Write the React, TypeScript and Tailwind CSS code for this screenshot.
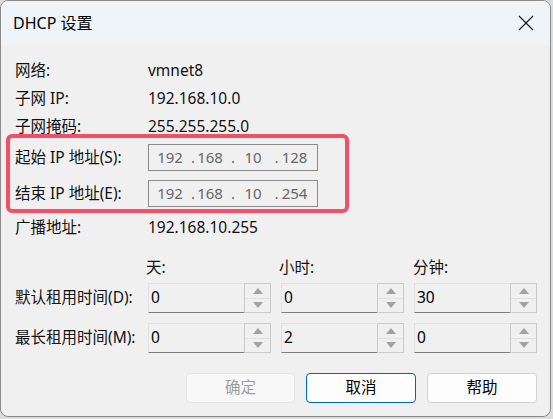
import React from "react";

const font = "font-['Noto_Sans','Noto_Sans_CJK_SC',sans-serif]";

function IpBox({ last }: { last: string }) {
  return (
    <div className="flex h-[27px] w-[170px] items-center border border-[#8c8c8c] bg-[#f0f0f0] text-[15px] text-[#666]">
      <span className="w-[8px]" />
      <span className="w-[26px] text-center">192</span>
      <span className="w-[14px] pr-[2px] text-right">.</span>
      <span className="w-[26px] text-center">168</span>
      <span className="w-[17px] pr-[5px] text-right">.</span>
      <span className="w-[26px] text-center">10</span>
      <span className="w-[15.5px] pr-[3px] text-right">.</span>
      <span className="w-[26px] text-center">{last}</span>
    </div>
  );
}

function Tri({ up }: { up?: boolean }) {
  return (
    <svg width="10" height="6" viewBox="0 0 10 6">
      <polygon points={up ? "0,6 10,6 5,0" : "0,0 10,0 5,6"} fill="#a2a2a2" />
    </svg>
  );
}

function Spin({ value }: { value: string }) {
  return (
    <div className="flex h-[30px] w-[123px]">
      <div className="flex flex-1 items-center border-l border-t border-b border-l-[#e2e2e2] border-t-[#e2e2e2] border-b-[#7f7f7f] bg-[#f0f0f0] pl-[2px] text-[15.5px] text-black">
        {value}
      </div>
      <div className="flex w-[27px] flex-col border border-[#c9c9c9] bg-[#f0f0f0]">
        <div className="flex flex-1 items-center justify-center border-b border-[#e0e0e0]">
          <Tri up />
        </div>
        <div className="flex flex-1 items-center justify-center">
          <Tri />
        </div>
      </div>
    </div>
  );
}

export default function App() {
  const info = [
    ["网络:", "vmnet8"],
    ["子网 IP:", "192.168.10.0"],
    ["子网掩码:", "255.255.255.0"],
  ];

  return (
    <div className={`h-[419px] w-[553px] overflow-hidden bg-[#dcdcdc] ${font}`}>
      <div className="relative flex h-[417px] w-[551px] flex-col overflow-hidden rounded-[8px] border border-[#8a8a8a] bg-[#f0f0f0] text-[15.5px] text-[#111]">
        {/* title bar */}
        <div className="flex h-[44px] shrink-0 items-center justify-between bg-[#eff4f9] pl-[12px] pr-[16px]">
          <span className="text-[16px] text-black">DHCP 设置</span>
          <svg width="16" height="16" viewBox="0 0 16 16">
            <path d="M1 1 L15 15 M15 1 L1 15" stroke="#1b1b1b" strokeWidth="1.2" />
          </svg>
        </div>

        <div className="flex flex-col pl-[14px] pt-[12px]">
          {info.map(([label, value]) => (
            <div key={label} className="flex h-[28px] items-center">
              <span className="w-[133px]">{label}</span>
              <span className="text-[15.5px]">{value}</span>
            </div>
          ))}
          <div className="mt-[3px] flex items-center">
            <span className="w-[133px]">起始 IP 地址(S):</span>
            <IpBox last="128" />
          </div>
          <div className="mt-[9px] flex items-center">
            <span className="w-[133px]">结束 IP 地址(E):</span>
            <IpBox last="254" />
          </div>
          <div className="mt-[8px] flex h-[26px] items-center">
            <span className="w-[133px]">广播地址:</span>
            <span className="text-[15.5px]">192.168.10.255</span>
          </div>

          <div className="mt-[17px] flex h-[20px] items-center pl-[131px]">
            <span className="w-[133px]">天:</span>
            <span className="w-[134px]">小时:</span>
            <span>分钟:</span>
          </div>
          <div className="mt-[5px] flex items-center">
            <span className="w-[133px]">默认租用时间(D):</span>
            <div className="flex gap-[10px]">
              <Spin value="0" />
              <Spin value="0" />
              <Spin value="30" />
            </div>
          </div>
          <div className="mt-[10px] flex items-center">
            <span className="w-[133px]">最长租用时间(M):</span>
            <div className="flex gap-[10px]">
              <Spin value="0" />
              <Spin value="2" />
              <Spin value="0" />
            </div>
          </div>

          <div className="mt-[20px] flex justify-end gap-[11px] pr-[13px]">
            <button className="h-[30px] w-[109px] rounded-[4px] border border-[#e5e5e5] bg-[#f8f8f8] text-[#9d9d9d]">
              确定
            </button>
            <button className="h-[30px] w-[110px] rounded-[4px] border border-[#0067c0] bg-[#fdfdfd] text-black">
              取消
            </button>
            <button className="h-[30px] w-[110px] rounded-[4px] border border-[#d0d0d0] bg-[#fdfdfd] text-black">
              帮助
            </button>
          </div>
        </div>

        {/* red highlight annotation */}
        <div className="absolute left-[5px] top-[133px] h-[79px] w-[343px] rounded-[6px] border-[4px] border-[#f44f67]" />
      </div>
    </div>
  );
}
